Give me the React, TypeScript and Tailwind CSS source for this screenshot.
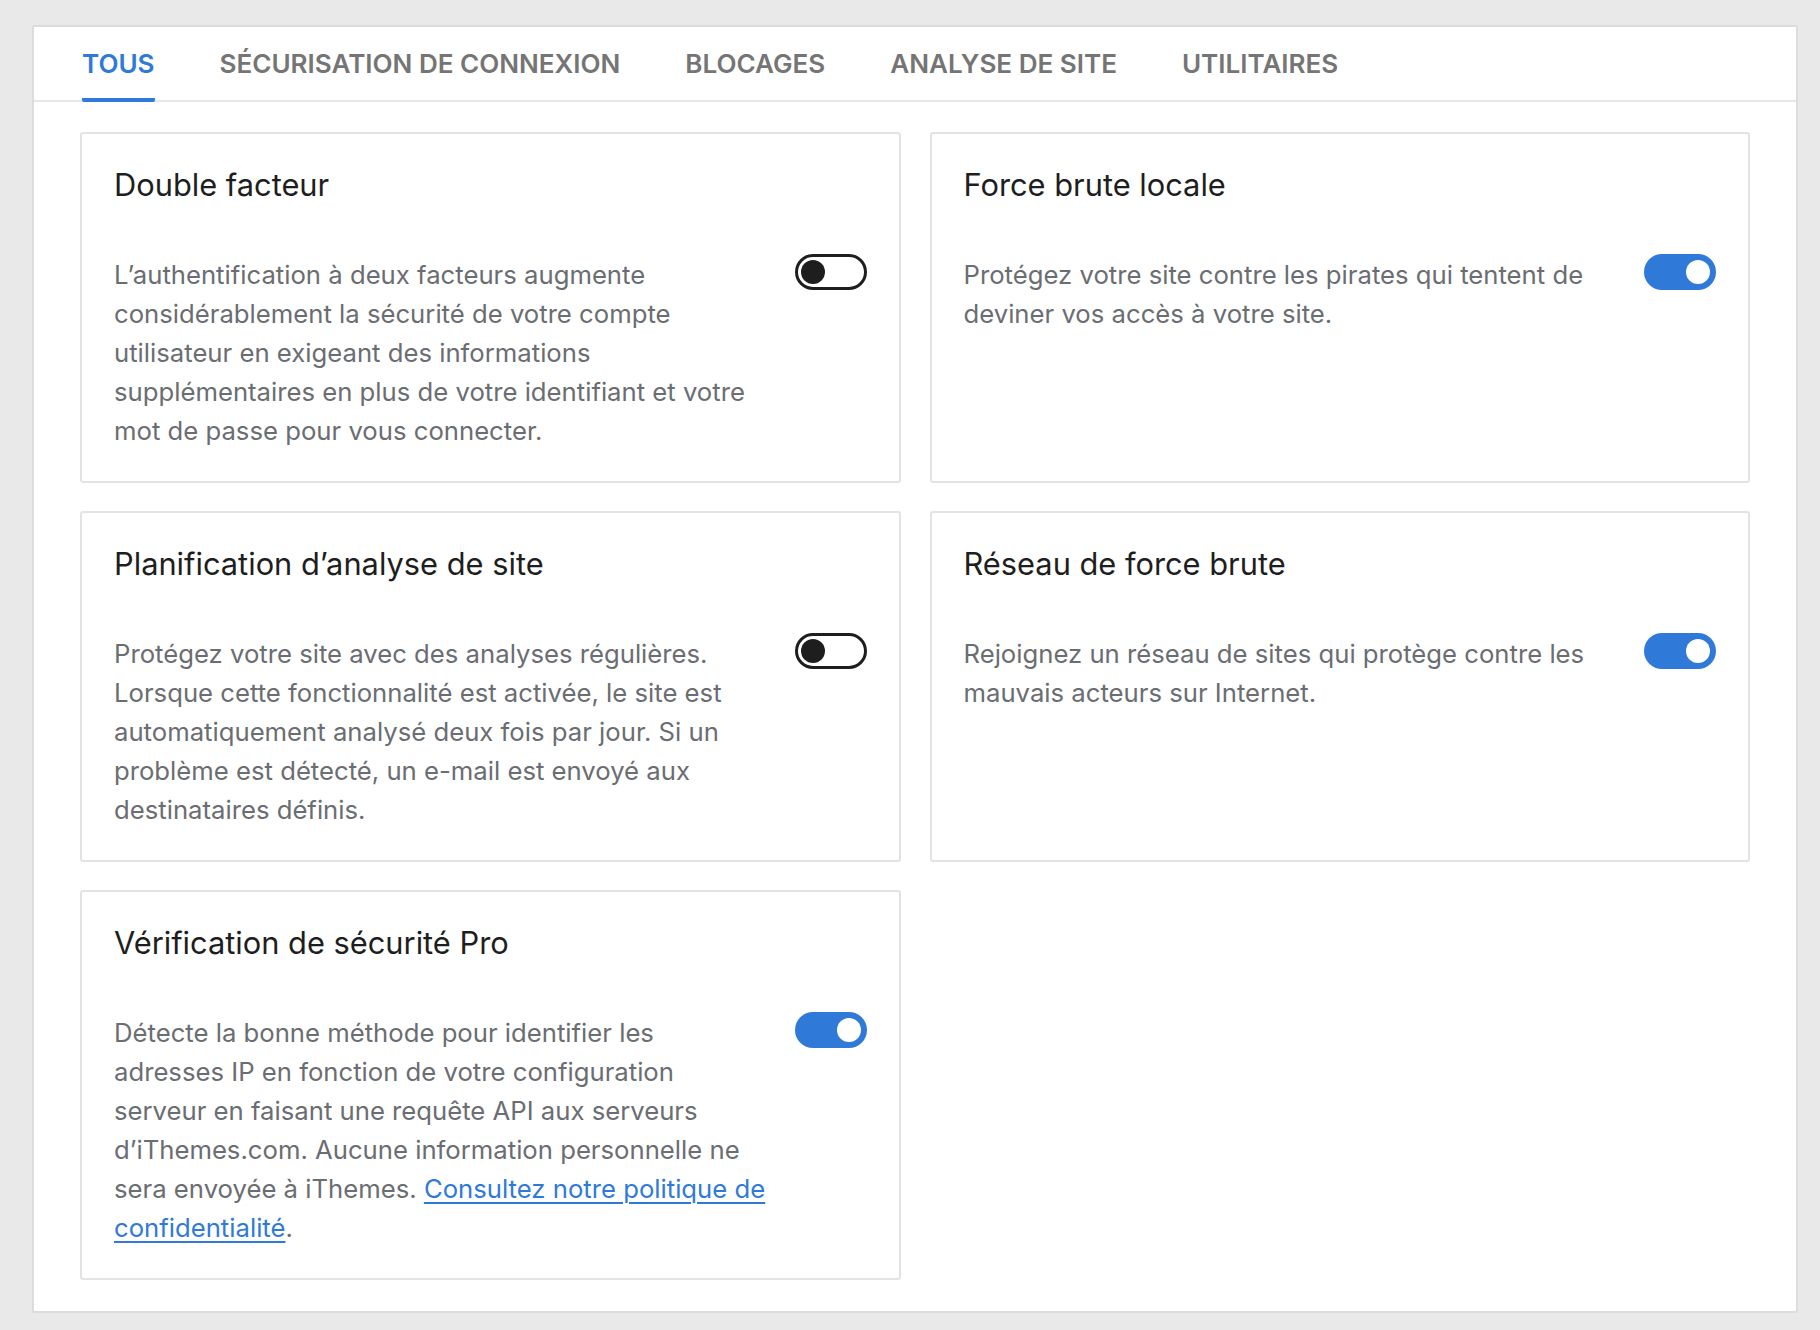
import React from "react";

function Toggle({ on }: { on: boolean }) {
  return on ? (
    <div className="flex h-[36px] w-[72px] shrink-0 items-center justify-end rounded-full bg-[#2f7ad9] pr-[6px]">
      <div className="h-[24px] w-[24px] rounded-full bg-white" />
    </div>
  ) : (
    <div className="flex h-[36px] w-[72px] shrink-0 items-center rounded-full border-[3px] border-[#1e1e1e] bg-white pl-[3px]">
      <div className="h-[24px] w-[24px] rounded-full bg-[#1e1e1e]" />
    </div>
  );
}

function Card({ title, on, children }: { title: string; on: boolean; children: React.ReactNode }) {
  return (
    <div className="rounded-[3px] border-2 border-[#e2e3e5] bg-white pb-[31px] pl-[32px] pr-[32px] pt-[31px]">
      <h2 className="text-[30.8px] leading-[40px] font-normal text-[#1e1e1e]">{title}</h2>
      <div className="mt-[50px] flex items-start justify-between">
        <p className="w-[656px] text-[25.7px] leading-[39px] text-[#6a6d72]">{children}</p>
        <div className="mt-[-1px]">
          <Toggle on={on} />
        </div>
      </div>
    </div>
  );
}

const tabs = ["TOUS", "SÉCURISATION DE CONNEXION", "BLOCAGES", "ANALYSE DE SITE", "UTILITAIRES"];
const linkClass = "text-[#2f7ad9] underline decoration-2 underline-offset-[4px]";

export default function App() {
  return (
    <div className="h-[1330px] bg-[#e9e9e9] pl-[32px] pr-[22px] pt-[25px] font-['Inter',sans-serif]">
      <div className="h-[1288px] rounded-[2px] border-2 border-[#dcdcde] bg-white">
        <div className="flex gap-[65px] border-b-2 border-[#e6e7e9] pl-[48px]">
          {tabs.map((t, i) => (
            <div
              key={t}
              className={
                i === 0
                  ? "relative h-[73px] pt-[19px] text-[26.05px] leading-[36px] font-semibold text-[#2f7ad9]"
                  : "h-[73px] pt-[19px] text-[26.05px] leading-[36px] font-semibold text-[#757575]"
              }
            >
              {t}
              {i === 0 && (
                <div className="absolute bottom-[-2px] left-0 right-0 h-[4px] rounded-b-[2px] bg-[#2f7ad9]" />
              )}
            </div>
          ))}
        </div>
        <div className="grid grid-cols-2 gap-x-[29px] gap-y-[28px] pl-[46px] pr-[46px] pt-[30px]">
          <Card title="Double facteur" on={false}>
            L’authentification à deux facteurs augmente considérablement la sécurité de votre compte utilisateur en exigeant des informations supplémentaires en plus de votre identifiant et votre mot de passe pour vous connecter.
          </Card>
          <Card title="Force brute locale" on={true}>
            Protégez votre site contre les pirates qui tentent de deviner vos accès à votre site.
          </Card>
          <Card title="Planification d’analyse de site" on={false}>
            Protégez votre site avec des analyses régulières. Lorsque cette fonctionnalité est activée, le site est automatiquement analysé deux fois par jour. Si un problème est détecté, un e-mail est envoyé aux destinataires définis.
          </Card>
          <Card title="Réseau de force brute" on={true}>
            Rejoignez un réseau de sites qui protège contre les mauvais acteurs sur Internet.
          </Card>
          <Card title="Vérification de sécurité Pro" on={true}>
            Détecte la bonne méthode pour identifier les adresses IP en fonction de votre configuration serveur en faisant une requête API aux serveurs d’iThemes.com. Aucune information personnelle ne sera envoyée à iThemes.{" "}
            <a className={linkClass} href="#">
              Consultez notre politique de
            </a>{" "}
            <a className={linkClass} href="#">
              confidentialité
            </a>
            .
          </Card>
        </div>
      </div>
    </div>
  );
}
